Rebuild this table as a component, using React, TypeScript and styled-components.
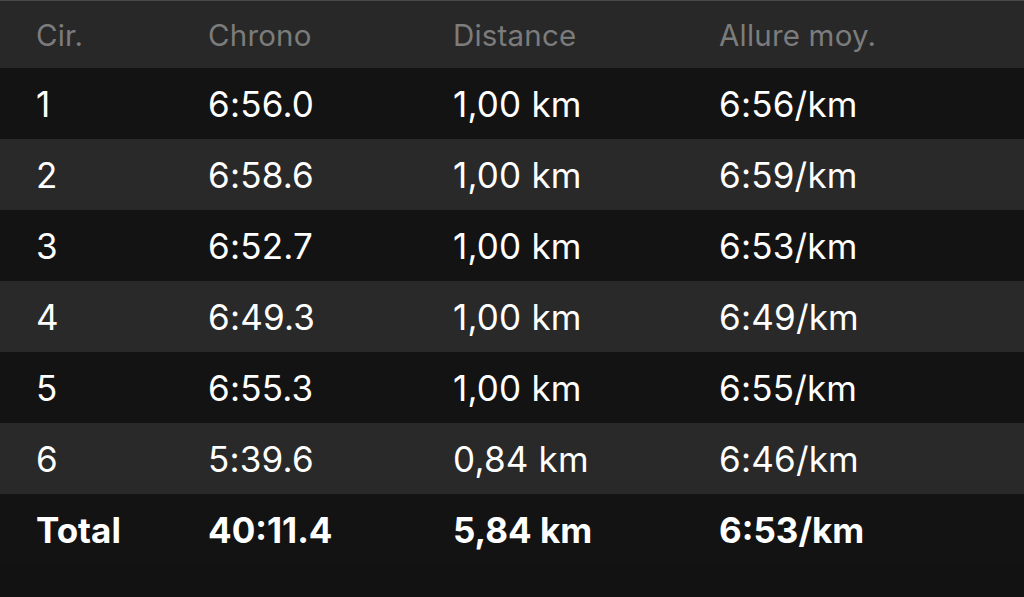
import React from "react";
import styled, { createGlobalStyle } from "styled-components";

const Global = createGlobalStyle`
  html, body { margin: 0; padding: 0; background: #121212; }
  body { font-family: Inter, "Noto Sans", sans-serif; -webkit-font-smoothing: antialiased; }
`;

const Table = styled.div`
  width: 1024px;
  height: 597px;
  background: #121212;
  border-top: 1px solid #4a4a4a;
  box-sizing: border-box;
  display: flex;
  flex-direction: column;
  overflow: hidden;
`;

const Row = styled.div<{ $tone: "head" | "dark" | "light" }>`
  display: grid;
  grid-template-columns: 172px 245px 266px 1fr;
  align-items: center;
  padding-left: 37px;
  height: ${(p) => (p.$tone === "head" ? "67px" : "71px")};
  flex-shrink: 0;
  background: ${(p) =>
    p.$tone === "head" ? "#282828" : p.$tone === "light" ? "#292929" : "#131313"};
`;

const HeadCell = styled.div`
  color: #7c7c7c;
  font-size: 29.5px;
  font-weight: 400;
  letter-spacing: 0.2px;
  margin-left: -1px;
`;

const Cell = styled.div<{ $bold?: boolean }>`
  color: #ffffff;
  font-size: 35px;
  font-weight: ${(p) => (p.$bold ? 700 : 400)};
  letter-spacing: ${(p) => (p.$bold ? "0" : "0.2px")};
  margin-left: -1px;
  padding-top: 1px;
`;

const laps = [
  ["1", "6:56.0", "1,00 km", "6:56/km"],
  ["2", "6:58.6", "1,00 km", "6:59/km"],
  ["3", "6:52.7", "1,00 km", "6:53/km"],
  ["4", "6:49.3", "1,00 km", "6:49/km"],
  ["5", "6:55.3", "1,00 km", "6:55/km"],
  ["6", "5:39.6", "0,84 km", "6:46/km"],
];

export default function App() {
  return (
    <>
      <Global />
      <Table>
        <Row $tone="head">
          <HeadCell>Cir.</HeadCell>
          <HeadCell>Chrono</HeadCell>
          <HeadCell>Distance</HeadCell>
          <HeadCell>Allure moy.</HeadCell>
        </Row>
        {laps.map((l, i) => (
          <Row key={l[0]} $tone={i % 2 === 0 ? "dark" : "light"}>
            {l.map((v, j) => (
              <Cell key={j}>{v}</Cell>
            ))}
          </Row>
        ))}
        <Row $tone="dark">
          <Cell $bold>Total</Cell>
          <Cell $bold>40:11.4</Cell>
          <Cell $bold>5,84 km</Cell>
          <Cell $bold>6:53/km</Cell>
        </Row>
      </Table>
    </>
  );
}
